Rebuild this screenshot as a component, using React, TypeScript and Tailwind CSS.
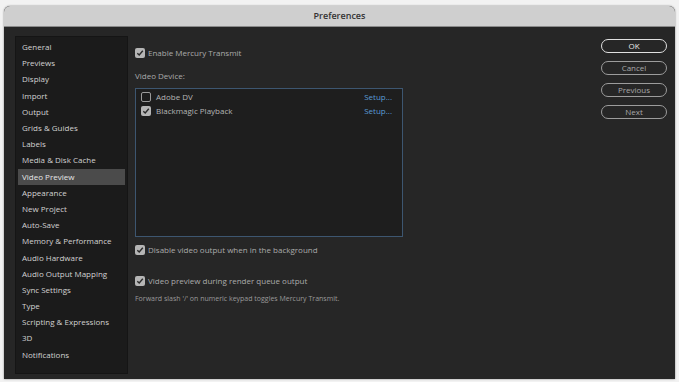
import React from "react";

const items = [
  "General",
  "Previews",
  "Display",
  "Import",
  "Output",
  "Grids & Guides",
  "Labels",
  "Media & Disk Cache",
  "Video Preview",
  "Appearance",
  "New Project",
  "Auto-Save",
  "Memory & Performance",
  "Audio Hardware",
  "Audio Output Mapping",
  "Sync Settings",
  "Type",
  "Scripting & Expressions",
  "3D",
  "Notifications",
];

function Check({ on }: { on: boolean }) {
  return on ? (
    <span className="w-[10px] h-[10px] rounded-[2px] bg-[#b5b5b5] flex items-center justify-center shrink-0">
      <svg width="8" height="8" viewBox="0 0 8 8">
        <path d="M1.3 4.2 L3.2 6 L6.8 1.8" fill="none" stroke="#2a2a2a" strokeWidth="1.4" />
      </svg>
    </span>
  ) : (
    <span className="w-[10px] h-[10px] rounded-[2px] border border-[#9a9a9a] bg-[#1c1c1c] shrink-0" />
  );
}

function Btn({ label, primary }: { label: string; primary?: boolean }) {
  return (
    <div
      className={`w-[66px] h-[14px] rounded-full border flex items-center justify-center text-[8px] leading-none ${
        primary ? "border-[#e0e0e0] text-[#e8e8e8]" : "border-[#9c9c9c] text-[#a8a8a8]"
      }`}
    >
      {label}
    </div>
  );
}

export default function App() {
  return (
    <div
      className="w-[679px] h-[382px] bg-[#f2f2f2] pt-[6px] pl-[4px]"
      style={{ fontFamily: '"Open Sans", "Noto Sans", sans-serif' }}
    >
      <div className="w-[671px] h-[373px] rounded-t-[6px] overflow-hidden flex flex-col bg-[#262626] shadow-[0_0_2px_rgba(0,0,0,0.5)]">
        <div className="h-[21px] bg-[#cfcfcf] border-b border-[#8a8a8a] flex items-center justify-center text-[9px] font-semibold text-[#333]">
          Preferences
        </div>
        <div className="flex-1 flex pt-[9px] pl-[11px] pr-[8px] pb-[4px]">
          <div className="w-[113px] h-[338px] bg-[#1b1b1b] border border-[#151515] pt-[2px] px-[2px] flex flex-col">
            {items.map((it) => (
              <div
                key={it}
                className={`h-[16.2px] flex items-center pl-[4px] text-[8px] leading-none ${
                  it === "Video Preview" ? "bg-[#4b4b4b] text-[#e6e6e6]" : "text-[#d2d2d2]"
                }`}
              >
                {it}
              </div>
            ))}
          </div>
          <div className="flex-1 pl-[7px] pt-[12px] flex flex-col text-[8px] leading-none text-[#ababab]">
            <div className="flex items-center gap-[3px]">
              <Check on />
              <span>Enable Mercury Transmit</span>
            </div>
            <div className="mt-[14px]">Video Device:</div>
            <div className="mt-[8px] w-[268px] h-[149px] border border-[#3d5670] bg-[#1e1e1e] pt-[3px] pl-[5px] pr-[10px] flex flex-col gap-[4px]">
              <div className="flex items-center gap-[5px]">
                <Check on={false} />
                <span className="flex-1 text-[#b5b5b5]">Adobe DV</span>
                <span className="text-[#5a9bd5]">Setup...</span>
              </div>
              <div className="flex items-center gap-[5px]">
                <Check on />
                <span className="flex-1 text-[#b5b5b5]">Blackmagic Playback</span>
                <span className="text-[#5a9bd5]">Setup...</span>
              </div>
            </div>
            <div className="mt-[8px] flex items-center gap-[3px]">
              <Check on />
              <span>Disable video output when in the background</span>
            </div>
            <div className="mt-[21px] flex items-center gap-[3px]">
              <Check on />
              <span>Video preview during render queue output</span>
            </div>
            <div className="mt-[9px] text-[7px] text-[#9a9a9a]">
              Forward slash '/' on numeric keypad toggles Mercury Transmit.
            </div>
          </div>
          <div className="flex flex-col gap-[8px] pt-[3px]">
            <Btn label="OK" primary />
            <Btn label="Cancel" />
            <Btn label="Previous" />
            <Btn label="Next" />
          </div>
        </div>
      </div>
    </div>
  );
}
